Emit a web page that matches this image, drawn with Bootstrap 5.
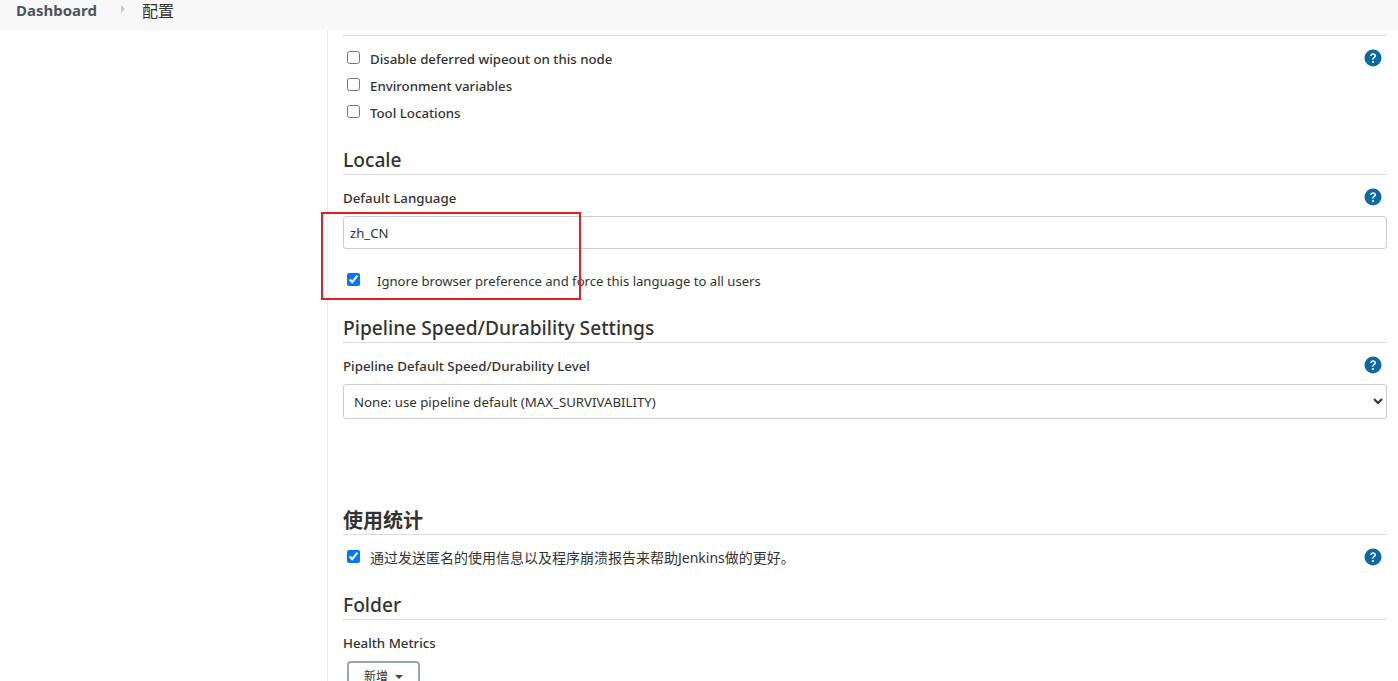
<!DOCTYPE html>
<html lang="zh">
<head>
<meta charset="utf-8">
<title>配置</title>
<link href="https://cdn.jsdelivr.net/npm/bootstrap@5.3.0/dist/css/bootstrap.min.css" rel="stylesheet">
<script src="https://cdn.jsdelivr.net/npm/bootstrap@5.3.0/dist/js/bootstrap.bundle.min.js"></script>
<style>
html, body { height: 681px; overflow: hidden; }
body { font-family: "Noto Sans", "Noto Sans CJK SC", sans-serif; font-size: 13.2px; color: #333; background: #fff; position: relative; }
.topbar { height: 30px; background: #f8f8f8; position: relative; z-index: 2; padding-left: 16px; font-size: 15px; margin-bottom: -30px; }
.crumb-root { font-weight: 700; color: #4d545d; line-height: 20px; }
.crumb-sep { width: 0; height: 0; border-left: 4px solid #ccc; border-top: 4px solid transparent; border-bottom: 4px solid transparent; margin: 5px 17px 0 24px; }
.crumb-cur { color: #333; line-height: 22px; font-size: 16px; }
.shell { height: 681px; }
.side-col { width: 328px; flex: none; border-right: 1px solid #eee; }
.main-col { flex: 1; padding: 0 11px 0 15px; min-width: 0; }
.sec-head { font-size: 19.2px; font-weight: 500; line-height: 26px; border-bottom: 1px solid #ddd; margin: 0; padding-top: 3px; color: #333; height: 31px; }
.sec-cjk { font-size: 20px; font-weight: 600; padding-top: 4px; }
.gap-first { margin-top: 5px; padding-top: 1px; }
.gap-sec { margin-top: 17px; }
.gap-usage { margin-top: 85px; }
.opt { height: 27px; }
.gap-opt { margin-top: 10px; }
.gap-check { margin-top: 19px; }
.opt-box { width: 13px; height: 13px; margin: 0 0 4px 4px; flex: none; }
.opt-label { margin-left: 10px; font-weight: 500; font-size: 13.25px; }
.opt-label-wide { margin-left: 17px; font-weight: 400; font-size: 13.1px; }
.opt-label-cjk { font-size: 14px; font-weight: 400; padding-bottom: 2px; }
.fld-row { height: 18px; margin-top: 14px; }
.fld-label { font-weight: 500; line-height: 18px; font-size: 13.3px; }
.help-dot { width: 18px; height: 18px; flex: none; margin: 0 5px 2px 0; }
.opt .help-dot { margin-bottom: 4px; }
.gap-fld { margin-top: 9px; }
.text-fld { height: 33px; font-size: 13.2px; padding: 0 6px; border: 1px solid #ccc; border-radius: 3px; color: #333; }
.sel-fld { height: 35px; font-size: 13.25px; padding: 0 6px; border: 1px solid #ccc; border-radius: 3px; color: #333; appearance: auto; -webkit-appearance: auto; background-image: none; background-color: #fff; }
.add-btn { height: 32px; width: 73px; border: 2px solid #9aa5ad; border-radius: 4px; background: #fff; color: #333; font-size: 12px; padding: 0; margin-left: 4px; }
.caret-mark { display: inline-block; width: 0; height: 0; border-top: 4px solid #444; border-left: 4px solid transparent; border-right: 4px solid transparent; margin-left: 4px; vertical-align: 2px; }
.hilite { position: absolute; left: 321px; top: 212px; width: 260px; height: 88px; border: 2px solid #ed1c24; pointer-events: none; z-index: 1; }
</style>
</head>
<body>
<svg width="0" height="0" class="d-block position-absolute"><defs>
<symbol id="help" viewBox="0 0 18 18"><circle cx="9" cy="9" r="8.5" fill="#0b6aa2"/><path d="M6.2 7.1c0-1.7 1.2-2.8 2.9-2.8 1.7 0 2.9 1 2.9 2.5 0 1.1-.6 1.7-1.4 2.3-.7.5-1 .8-1 1.6H8.2c0-1.2.4-1.8 1.2-2.4.7-.5 1-.9 1-1.4 0-.7-.5-1.1-1.3-1.1-.8 0-1.3.5-1.4 1.3z" fill="#fff"/><circle cx="9" cy="13" r="1.1" fill="#fff"/></symbol>
</defs></svg>

<header class="topbar d-flex align-items-start">
  <span class="crumb-root">Dashboard</span>
  <span class="crumb-sep"></span>
  <span class="crumb-cur">配置</span>
</header>

<div class="shell d-flex">
  <aside class="side-col"></aside>
  <main class="main-col">
    <h2 class="sec-head sec-cjk gap-first">全局属性</h2>
    <div class="opt d-flex align-items-center gap-opt">
      <input class="opt-box" type="checkbox" aria-label="Disable deferred wipeout on this node">
      <span class="opt-label flex-grow-1">Disable deferred wipeout on this node</span>
      <svg class="help-dot"><use href="#help"/></svg>
    </div>
    <div class="opt d-flex align-items-center">
      <input class="opt-box" type="checkbox" aria-label="Environment variables">
      <span class="opt-label">Environment variables</span>
    </div>
    <div class="opt d-flex align-items-center">
      <input class="opt-box" type="checkbox" aria-label="Tool Locations">
      <span class="opt-label">Tool Locations</span>
    </div>

    <h2 class="sec-head gap-sec">Locale</h2>
    <div class="fld-row d-flex align-items-center justify-content-between">
      <span class="fld-label">Default Language</span>
      <svg class="help-dot"><use href="#help"/></svg>
    </div>
    <input class="form-control text-fld gap-fld" type="text" value="zh_CN" aria-label="Default Language">
    <div class="opt d-flex align-items-center gap-check">
      <input class="opt-box" type="checkbox" checked aria-label="Ignore browser preference">
      <span class="opt-label-wide">Ignore browser preference and force this language to all users</span>
    </div>

    <h2 class="sec-head gap-sec">Pipeline Speed/Durability Settings</h2>
    <div class="fld-row d-flex align-items-center justify-content-between">
      <span class="fld-label">Pipeline Default Speed/Durability Level</span>
      <svg class="help-dot"><use href="#help"/></svg>
    </div>
    <select class="form-select sel-fld gap-fld" aria-label="Pipeline Default Speed/Durability Level">
      <option>None: use pipeline default (MAX_SURVIVABILITY)</option>
    </select>

    <h2 class="sec-head sec-cjk gap-usage">使用统计</h2>
    <div class="opt d-flex align-items-center gap-opt">
      <input class="opt-box" type="checkbox" checked aria-label="使用统计">
      <span class="opt-label opt-label-cjk flex-grow-1">通过发送匿名的使用信息以及程序崩溃报告来帮助Jenkins做的更好。</span>
      <svg class="help-dot"><use href="#help"/></svg>
    </div>

    <h2 class="sec-head gap-sec">Folder</h2>
    <div class="fld-row fld-label">Health Metrics</div>
    <button class="btn add-btn gap-fld" type="button">新增 <span class="caret-mark"></span></button>
  </main>
</div>
<div class="hilite"></div>
</body>
</html>
